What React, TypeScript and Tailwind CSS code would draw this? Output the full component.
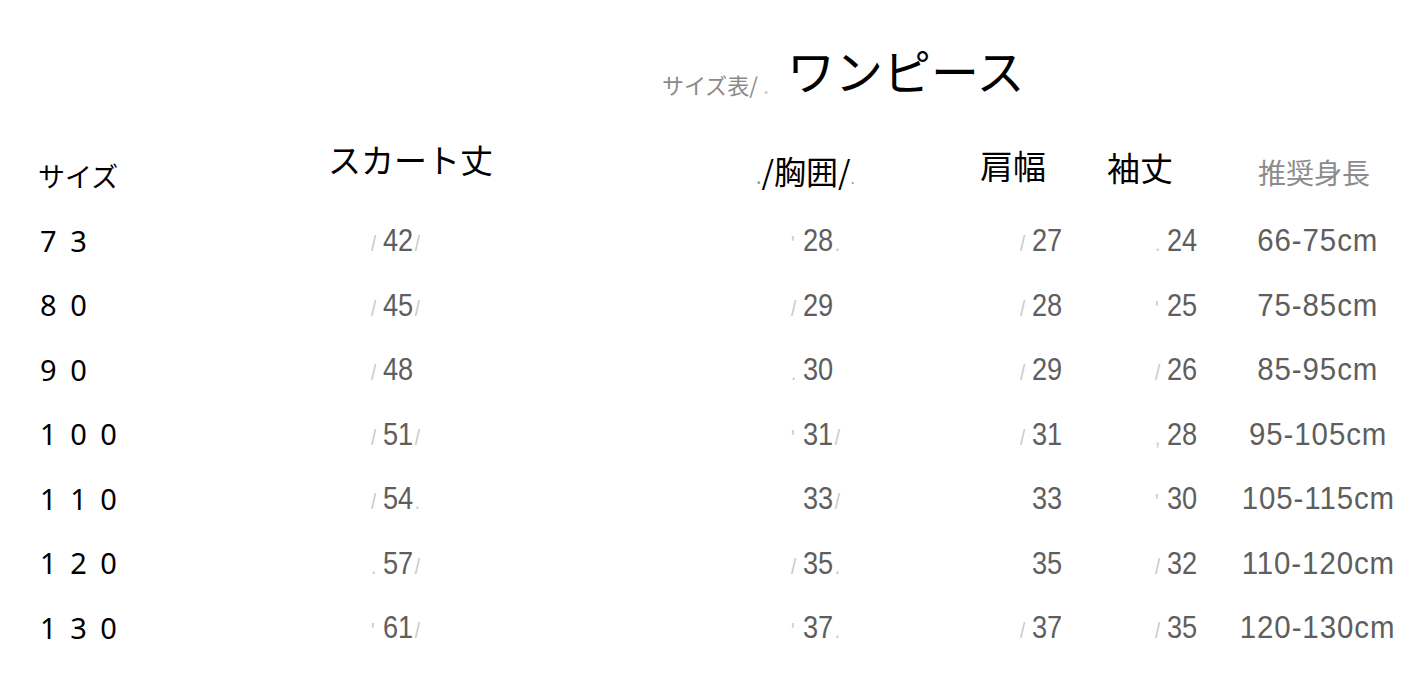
import React from "react";

type Cell = { pre?: string; v: string; post?: string };

const rows: { size: string; cells: Cell[]; height: string }[] = [
  { size: "7 3", cells: [{ pre: "/", v: "42", post: "/" }, { pre: "'", v: "28", post: "." }, { pre: "/", v: "27" }, { pre: ".", v: "24" }], height: "66-75cm" },
  { size: "8 0", cells: [{ pre: "/", v: "45", post: "/" }, { pre: "/", v: "29" }, { pre: "/", v: "28" }, { pre: "'", v: "25" }], height: "75-85cm" },
  { size: "9 0", cells: [{ pre: "/", v: "48" }, { pre: ".", v: "30" }, { pre: "/", v: "29" }, { pre: "/", v: "26" }], height: "85-95cm" },
  { size: "1 0 0", cells: [{ pre: "/", v: "51", post: "/" }, { pre: "'", v: "31", post: "/" }, { pre: "/", v: "31" }, { pre: ",", v: "28" }], height: "95-105cm" },
  { size: "1 1 0", cells: [{ pre: "/", v: "54", post: "." }, { v: "33", post: "/" }, { v: "33" }, { pre: "'", v: "30" }], height: "105-115cm" },
  { size: "1 2 0", cells: [{ pre: ".", v: "57", post: "/" }, { pre: "/", v: "35", post: "." }, { v: "35" }, { pre: "/", v: "32" }], height: "110-120cm" },
  { size: "1 3 0", cells: [{ pre: "'", v: "61", post: "/" }, { pre: "'", v: "37", post: "." }, { pre: "/", v: "37" }, { pre: "/", v: "35" }], height: "120-130cm" },
];

// left padding of the number inside each measurement column
const numPad = ["pl-[43px]", "pl-[31px]", "pl-[40px]", "pl-[48px]"];

const cols = "grid grid-cols-[328px_432px_220px_127px_135px_152px]";
const jp = { fontFamily: '"Noto Sans CJK JP", "Noto Sans", sans-serif' };
const num = { fontFamily: '"Liberation Sans", Arial, sans-serif' };

function Num({ c }: { c: Cell }) {
  return (
    <span className="inline-block origin-left scale-x-[0.85] whitespace-nowrap text-[32px] leading-none text-[#5e5e5e]" style={num}>
      <span className="inline-block w-[14px] text-[#c8c8c8] text-[22px]">{c.pre ?? ""}</span>
      {c.v}
      <span className="ml-[2px] text-[#c8c8c8] text-[22px]">{c.post ?? ""}</span>
    </span>
  );
}

export default function App() {
  return (
    <div className="w-[1415px] h-[674px] overflow-hidden bg-white" style={jp}>
      {/* title */}
      <div className="pt-[40px] h-[105px] flex items-end pl-[662px] gap-[18px]">
        <span className="text-[22px] leading-none text-[#8a8a8a] mb-[10px]">
          サイズ表/<span className="text-[#ccc]"> .</span>
        </span>
        <span className="text-[48px] leading-none text-black mb-[12px]">ワンピース</span>
      </div>

      {/* header row */}
      <div className={`mt-[30px] h-[65px] ${cols} items-center text-black`}>
        <div className="pl-[38px] pt-[16px] text-[27px]">サイズ</div>
        <div className="text-[33px] pb-[16px]">スカート丈</div>
        <div className="text-[32px] pt-[4px] -ml-[4px]">
          <span className="text-[#999] text-[20px]">.</span>/胸囲/<span className="text-[#999] text-[14px]">.</span>
        </div>
        <div className="text-[33px] pb-[4px]">肩幅</div>
        <div className="text-[33px]">袖丈</div>
        <div className="text-[28px] pt-[8px] pl-[16px] text-[#8c8c8c]">推奨身長</div>
      </div>

      {/* data rows */}
      <div className="mt-[8px] flex flex-col">
        {rows.map((r) => (
          <div key={r.size} className={`h-[64.5px] ${cols} items-center`}>
            <div className="pl-[40px] text-[29px] tracking-[3px] text-black" style={{ fontFamily: '"Noto Sans", sans-serif' }}>
              {r.size}
            </div>
            {r.cells.map((c, i) => (
              <div key={i} className={numPad[i]}>
                <Num c={c} />
              </div>
            ))}
            <div className="flex justify-center whitespace-nowrap">
              <span className="shrink-0 inline-block scale-x-[0.92] tracking-[1px] text-[32px] leading-none text-[#5e5e5e]" style={num}>
                {r.height}
              </span>
            </div>
          </div>
        ))}
      </div>
    </div>
  );
}
